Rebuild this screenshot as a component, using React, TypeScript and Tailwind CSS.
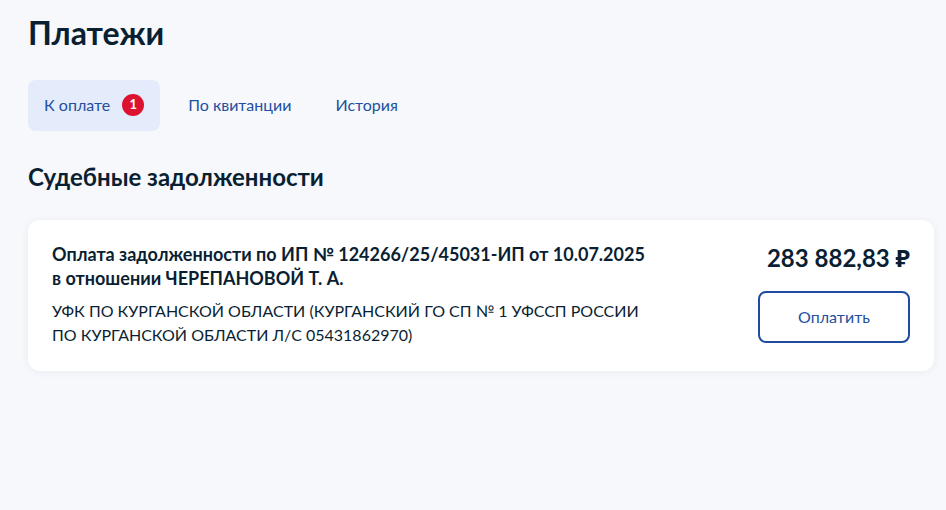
import React from "react";

export default function App() {
  return (
    <div
      className="min-h-[510px] w-full bg-[#f6f8fc] text-[#0b1f33]"
      style={{ fontFamily: "Lato, 'Noto Sans', sans-serif" }}
    >
      <div className="px-[28px] pt-[13px] pr-[12px]">
        <h1 className="text-[32px] leading-[40px] font-bold tracking-[0px]">Платежи</h1>

        <div className="mt-[27px] flex items-center">
          <div className="flex h-[51px] items-center gap-[12px] rounded-[8px] bg-[#e4ebfa] pl-[16px] pr-[16px] pb-[1px] text-[16px] text-[#23509f]">
            <span>К оплате</span>
            <span className="flex h-[22px] w-[22px] items-center justify-center rounded-full bg-[#dd1230] text-[13px] font-bold text-white">
              1
            </span>
          </div>
          <div className="flex h-[51px] items-center px-[28px] pb-[1px] text-[16px] text-[#23509f]">По квитанции</div>
          <div className="flex h-[51px] items-center pl-[16px] pb-[1px] text-[16px] text-[#23509f]">История</div>
        </div>

        <h2 className="mt-[30px] text-[24px] leading-[32px] font-bold">Судебные задолженности</h2>

        <div className="mt-[27px] flex justify-between rounded-[12px] bg-white px-[24px] pt-[22px] pb-[24px] shadow-[0_1px_8px_rgba(11,31,51,0.06)]">
          <div className="max-w-[600px]">
            <div className="text-[18px] leading-[24px] font-bold">
              Оплата задолженности по ИП № 124266/25/45031-ИП от 10.07.2025 в отношении ЧЕРЕПАНОВОЙ Т. А.
            </div>
            <div className="mt-[9px] text-[16px] leading-[24px]">
              УФК ПО КУРГАНСКОЙ ОБЛАСТИ (КУРГАНСКИЙ ГО СП № 1 УФССП РОССИИ ПО КУРГАНСКОЙ ОБЛАСТИ Л/С 05431862970)
            </div>
          </div>
          <div className="flex flex-col items-end">
            <div className="text-[24px] leading-[32px] font-bold">283 882,83 ₽</div>
            <button className="mt-[17px] h-[52px] w-[152px] rounded-[8px] border-2 border-[#1f4ca0] text-[16px] text-[#23509f]">
              Оплатить
            </button>
          </div>
        </div>
      </div>
    </div>
  );
}
